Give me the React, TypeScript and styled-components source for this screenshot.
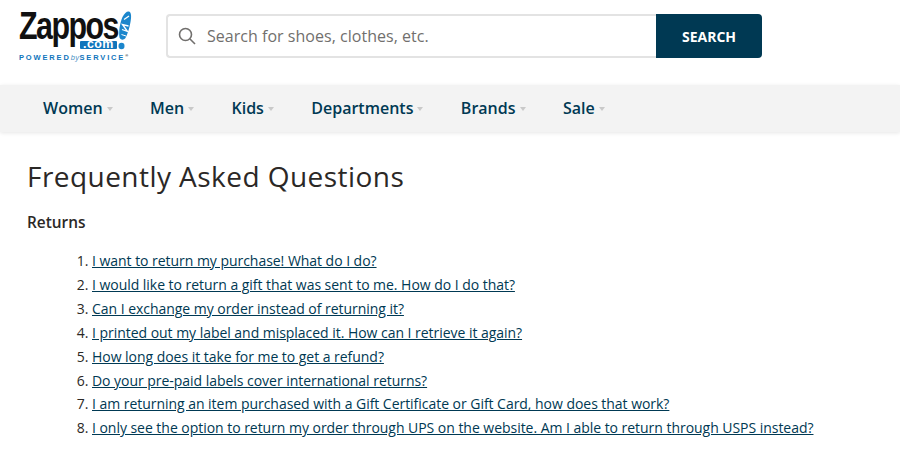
import React from 'react';
import styled, { createGlobalStyle } from 'styled-components';

const GlobalStyle = createGlobalStyle`
    html, body {
        margin: 0;
        padding: 0;
        background: #fff;
        overflow: hidden;
        font-family: 'Open Sans', sans-serif;
        color: #2b2826;
    }
`;

const Header = styled.header`
    display: flex;
    align-items: flex-start;
    height: 85px;
`;

const Logo = styled.a`
    display: block;
    width: 166px;
    padding: 11px 0 0 19px;
    box-sizing: border-box;
`;

const LogoTop = styled.div`
    display: flex;
    align-items: flex-start;
    height: 42px;
`;

const LogoWords = styled.div`
    display: flex;
    flex-direction: column;
    align-items: flex-end;
    width: 98px;
`;

const LogoName = styled.span`
    font-family: 'Liberation Sans', Arial, sans-serif;
    font-weight: 700;
    font-size: 38px;
    line-height: 30px;
    height: 30px;
    letter-spacing: -1.9px;
    color: #111;
    transform: scaleX(0.8);
    transform-origin: left;
    align-self: flex-start;
    white-space: nowrap;
`;

const LogoCom = styled.span`
    background: #0f75bc;
    color: #fff;
    font-family: 'Liberation Sans', Arial, sans-serif;
    font-weight: 700;
    font-size: 12.5px;
    line-height: 7px;
    height: 8px;
    width: 37px;
    text-align: center;
    letter-spacing: 0.4px;
    border-radius: 1px;
`;

const LogoTag = styled.div`
    font-family: 'Liberation Sans', Arial, sans-serif;
    font-size: 7.5px;
    line-height: 9px;
    font-weight: 700;
    letter-spacing: 1.85px;
    color: #0f75bc;
    white-space: nowrap;
`;

const LogoBy = styled.i`
    font-weight: 400;
    letter-spacing: 0.4px;
    color: #4a8fc4;
`;

const LogoMark = styled.sup`
    font-size: 4px;
    letter-spacing: 0;
    color: #333;
    vertical-align: 3px;
    line-height: 0;
`;

const SearchForm = styled.form`
    display: flex;
    margin-top: 14px;
    height: 44px;
    width: 596px;
`;

const SearchField = styled.div`
    display: flex;
    align-items: center;
    flex: 1;
    box-sizing: border-box;
    border: 2px solid #e3e3e3;
    border-right: none;
    border-radius: 4px 0 0 4px;
    padding-left: 10px;
    gap: 11px;
`;

const SearchText = styled.span`
    font-size: 16px;
    color: #716f6d;
    letter-spacing: 0.03px;
`;

const SearchButton = styled.button`
    width: 106px;
    border: none;
    padding: 0;
    background: #003953;
    color: #fff;
    border-radius: 0 4px 4px 0;
    font-family: 'Open Sans', sans-serif;
    font-weight: 700;
    font-size: 14px;
`;

const Nav = styled.nav`
    display: flex;
    align-items: center;
    height: 47px;
    padding: 0 0 2px 43px;
    box-sizing: border-box;
    gap: 37.4px;
    background: #f3f3f3;
    box-shadow: 0 1px 4px rgba(0, 0, 0, 0.1);
`;

const NavItem = styled.a`
    display: flex;
    align-items: center;
    font-size: 16px;
    font-weight: 600;
    color: #003953;
    gap: 4px;
`;

const Caret = styled.span`
    width: 0;
    height: 0;
    margin-top: 2px;
    border-left: 3.5px solid transparent;
    border-right: 3.5px solid transparent;
    border-top: 4px solid #c9c9c9;
`;

const Main = styled.main`
    padding: 23px 27px 0;
`;

const Title = styled.h1`
    margin: 0;
    font-size: 28px;
    line-height: 42px;
    font-weight: 400;
    letter-spacing: 0.45px;
    color: #2b2826;
`;

const SubTitle = styled.h2`
    margin: 15px 0 0;
    font-size: 15.4px;
    line-height: 22px;
    font-weight: 600;
`;

const QuestionList = styled.ol`
    margin: 15px 0 0;
    padding: 0 0 0 65px;
    font-size: 14px;
    line-height: 23.9px;
    letter-spacing: -0.036px;
`;

const Question = styled.a`
    color: #003953;
    text-decoration: underline;
`;

const questions = [
    'I want to return my purchase! What do I do?',
    'I would like to return a gift that was sent to me. How do I do that?',
    'Can I exchange my order instead of returning it?',
    'I printed out my label and misplaced it. How can I retrieve it again?',
    'How long does it take for me to get a refund?',
    'Do your pre-paid labels cover international returns?',
    'I am returning an item purchased with a Gift Certificate or Gift Card, how does that work?',
    'I only see the option to return my order through UPS on the website. Am I able to return through USPS instead?',
];

const navItems = ['Women', 'Men', 'Kids', 'Departments', 'Brands', 'Sale'];

const App = () => (
    <>
        <GlobalStyle />
        <Header>
            <Logo>
                <LogoTop>
                    <LogoWords>
                        <LogoName>Zappos</LogoName>
                        <LogoCom>.com</LogoCom>
                    </LogoWords>
                    <svg width="15" height="39" viewBox="0 0 15 39">
                        <path
                            d="M2.5 26.5 C1.5 20 3 12 5.5 6 C7.5 2 10 0 12 0.5 C14.5 1.5 14.5 6 13.5 11 C12.5 17 10.5 23 8.5 27 C6.5 29.5 3.5 29 2.5 26.5 Z"
                            fill="#1b86cc"
                        />
                        <path
                            d="M5 18.5 L10.5 20.5 L5.5 13.5 L11.5 15"
                            stroke="#fff"
                            strokeWidth="1.3"
                            fill="none"
                        />
                        <path d="M7 8.5 L12 5" stroke="#fff" strokeWidth="1.3" fill="none" />
                        <path d="M4.5 23.5 L9 25" stroke="#fff" strokeWidth="1" fill="none" />
                        <ellipse cx="4.5" cy="35" rx="3" ry="3.2" fill="#1b86cc" />
                    </svg>
                </LogoTop>
                <LogoTag>
                    POWERED<LogoBy>by</LogoBy>SERVICE<LogoMark>®</LogoMark>
                </LogoTag>
            </Logo>
            <SearchForm>
                <SearchField>
                    <svg width="18" height="18" viewBox="0 0 18 18" fill="none" stroke="#716f6d" strokeWidth="1.6">
                        <circle cx="7.5" cy="7.5" r="6" />
                        <path d="M12 12 L17 17" />
                    </svg>
                    <SearchText>Search for shoes, clothes, etc.</SearchText>
                </SearchField>
                <SearchButton type="button">SEARCH</SearchButton>
            </SearchForm>
        </Header>
        <Nav>
            {navItems.map((item) => (
                <NavItem key={item}>
                    {item}
                    <Caret />
                </NavItem>
            ))}
        </Nav>
        <Main>
            <Title>Frequently Asked Questions</Title>
            <SubTitle>Returns</SubTitle>
            <QuestionList>
                {questions.map((q) => (
                    <li key={q}>
                        <Question href="#">{q}</Question>
                    </li>
                ))}
            </QuestionList>
        </Main>
    </>
);

export default App;
